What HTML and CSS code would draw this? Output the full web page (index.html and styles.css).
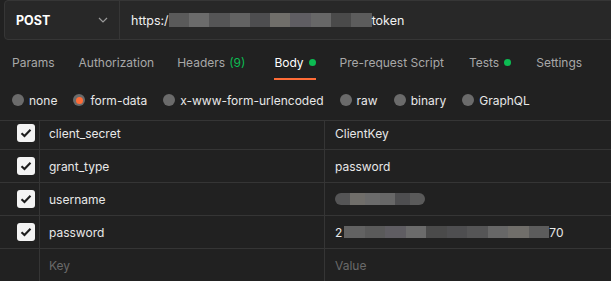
FILE: index.html
```html
<!DOCTYPE html>
<html>
<head>
<meta charset="utf-8">
<link rel="stylesheet" href="styles.css">
</head>
<body>
<div class="page">
  <div class="urlbar">
    <div class="method">
      <span class="method-name">POST</span>
      <svg class="chev" width="10" height="6" viewBox="0 0 10 6"><path d="M1 1 L5 5 L9 1" fill="none" stroke="#9a9a9a" stroke-width="1.2"/></svg>
    </div>
    <div class="url">
      <span>https:/</span><span class="mosaic"><i class="m1"></i><i class="m2"></i><i class="m3"></i><i class="m4"></i><i class="m5"></i><i class="m6"></i><i class="m7"></i><i class="m8"></i><i class="m9"></i><i class="m10"></i></span><span>token</span>
    </div>
  </div>

  <div class="tabs">
    <div class="tab t-params">Params</div>
    <div class="tab t-auth">Authorization</div>
    <div class="tab t-headers">Headers <span class="count">(9)</span></div>
    <div class="tab t-body active">Body <span class="dot"></span></div>
    <div class="tab t-pre">Pre-request Script</div>
    <div class="tab t-tests">Tests <span class="dot"></span></div>
    <div class="tab t-settings">Settings</div>
  </div>

  <div class="modes">
    <div class="mode"><span class="radio"></span>none</div>
    <div class="mode"><span class="radio on"></span>form-data</div>
    <div class="mode"><span class="radio"></span>x-www-form-urlencoded</div>
    <div class="mode"><span class="radio"></span>raw</div>
    <div class="mode"><span class="radio"></span>binary</div>
    <div class="mode"><span class="radio"></span>GraphQL</div>
  </div>

  <div class="table">
    <div class="rows">
      <div class="row">
        <div class="c-check"><span class="cb"><svg width="12" height="10" viewBox="0 0 12 10"><path d="M1.5 5.2 L4.5 8 L10.5 1.8" fill="none" stroke="#1e1e1e" stroke-width="2.1"/></svg></span></div>
        <div class="c-key">client_secret</div>
        <div class="c-val">ClientKey</div>
      </div>
      <div class="row">
        <div class="c-check"><span class="cb"><svg width="12" height="10" viewBox="0 0 12 10"><path d="M1.5 5.2 L4.5 8 L10.5 1.8" fill="none" stroke="#1e1e1e" stroke-width="2.1"/></svg></span></div>
        <div class="c-key">grant_type</div>
        <div class="c-val">password</div>
      </div>
      <div class="row">
        <div class="c-check"><span class="cb"><svg width="12" height="10" viewBox="0 0 12 10"><path d="M1.5 5.2 L4.5 8 L10.5 1.8" fill="none" stroke="#1e1e1e" stroke-width="2.1"/></svg></span></div>
        <div class="c-key">username</div>
        <div class="c-val"><span class="mosaic short"><i class="m3"></i><i class="m6"></i><i class="m2"></i><i class="m8"></i><i class="m5"></i><i class="m1"></i></span></div>
      </div>
      <div class="row">
        <div class="c-check"><span class="cb"><svg width="12" height="10" viewBox="0 0 12 10"><path d="M1.5 5.2 L4.5 8 L10.5 1.8" fill="none" stroke="#1e1e1e" stroke-width="2.1"/></svg></span></div>
        <div class="c-key">password</div>
        <div class="c-val"><span>2</span><span class="mosaic long"><i class="m4"></i><i class="m1"></i><i class="m7"></i><i class="m2"></i><i class="m9"></i><i class="m5"></i><i class="m3"></i><i class="m8"></i><i class="m6"></i><i class="m10"></i></span><span>70</span></div>
      </div>
      <div class="row">
        <div class="c-check"></div>
        <div class="c-key ph">Key</div>
        <div class="c-val ph">Value</div>
      </div>
    </div>
  </div>
</div>
</body>
</html>
```

FILE: styles.css
```css
html, body {
  margin: 0;
  padding: 0;
  background: #212121;
  width: 611px;
  height: 281px;
  overflow: hidden;
}
.page {
  font-family: Inter, "Open Sans", sans-serif;
  font-size: 12px;
  color: #e8e8e8;
}
.urlbar {
  display: flex;
  height: 38px;
  margin-left: 4px;
  margin-right: -10px;
  border: 1px solid #363636;
  border-radius: 4px;
  background: #282828;
}
.method {
  width: 92px;
  display: flex;
  align-items: center;
  justify-content: space-between;
  padding: 0 11px 0 11px;
  border-right: 1px solid #363636;
}
.method-name {
  font-weight: 700;
  font-size: 12.5px;
  color: #ffffff;
}
.url {
  display: flex;
  align-items: center;
  padding-left: 11px;
  color: #f0f0f0;
  font-size: 12.5px;
}
.mosaic {
  display: inline-flex;
  height: 14px;
  width: 203px;
}
.mosaic i {
  flex: 1;
  height: 100%;
}
.mosaic.short { width: 90px; border-radius: 6px; overflow: hidden; height: 12px; }
.mosaic.long { width: 205px; margin-left: 2px; height: 12px; }
.m1 { background: #5a5a5a; }
.m2 { background: #6b6b6b; }
.m3 { background: #555556; }
.m4 { background: #626262; }
.m5 { background: #4e4e50; }
.m6 { background: #706e6a; }
.m7 { background: #5f5d62; }
.m8 { background: #676767; }
.m9 { background: #4a4a4a; }
.m10 { background: #5c5c5c; }

.tabs {
  display: flex;
  height: 40px;
  padding-left: 12px;
  align-items: stretch;
}
.tab {
  display: flex;
  align-items: center;
  color: #a8a8a8;
  white-space: nowrap;
  border-bottom: 2px solid transparent;
  box-sizing: border-box;
  padding-top: 7px;
}
.t-auth { margin-left: 24px; }
.t-headers { margin-left: 23px; }
.t-body { margin-left: 29px; }
.t-pre { margin-left: 24px; }
.t-tests { margin-left: 25px; }
.t-settings { margin-left: 25px; }
.tab .count { color: #0cbb52; margin-left: 4px; }
.tab.active {
  color: #ffffff;
  border-bottom-color: #ff6c37;
}
.dot {
  width: 7px;
  height: 7px;
  border-radius: 50%;
  background: #0cbb52;
  margin-left: 5px;
}

.modes {
  display: flex;
  height: 40px;
  align-items: center;
  padding-left: 12px;
}
.mode {
  display: flex;
  align-items: center;
  margin-right: 16px;
  color: #e8e8e8;
}
.radio {
  width: 12px;
  height: 12px;
  border-radius: 50%;
  background: #6b6b6b;
  margin-right: 5px;
  display: flex;
  align-items: center;
  justify-content: center;
}
.radio.on::after {
  content: "";
  width: 7px;
  height: 7px;
  border-radius: 50%;
  background: #ff6c37;
}

.table {
  border-top: 1px solid #353535;
  height: 161px;
  overflow: hidden;
}
.rows {
  margin-top: -4px;
}
.row {
  display: flex;
  height: 33px;
  border-bottom: 1px solid #353535;
  box-sizing: border-box;
}
.c-check {
  width: 40px;
  border-right: 1px solid #353535;
  display: flex;
  align-items: center;
  justify-content: flex-end;
  padding-right: 4px;
  box-sizing: border-box;
}
.cb {
  width: 18px;
  height: 18px;
  border-radius: 3px;
  background: #f4f4f4;
  display: flex;
  align-items: center;
  justify-content: center;
}
.c-key {
  width: 285px;
  border-right: 1px solid #353535;
  display: flex;
  align-items: center;
  padding-left: 9px;
  box-sizing: border-box;
}
.c-val {
  flex: 1;
  display: flex;
  align-items: center;
  padding-left: 10px;
}
.ph { color: #6a6a6a; }
```
